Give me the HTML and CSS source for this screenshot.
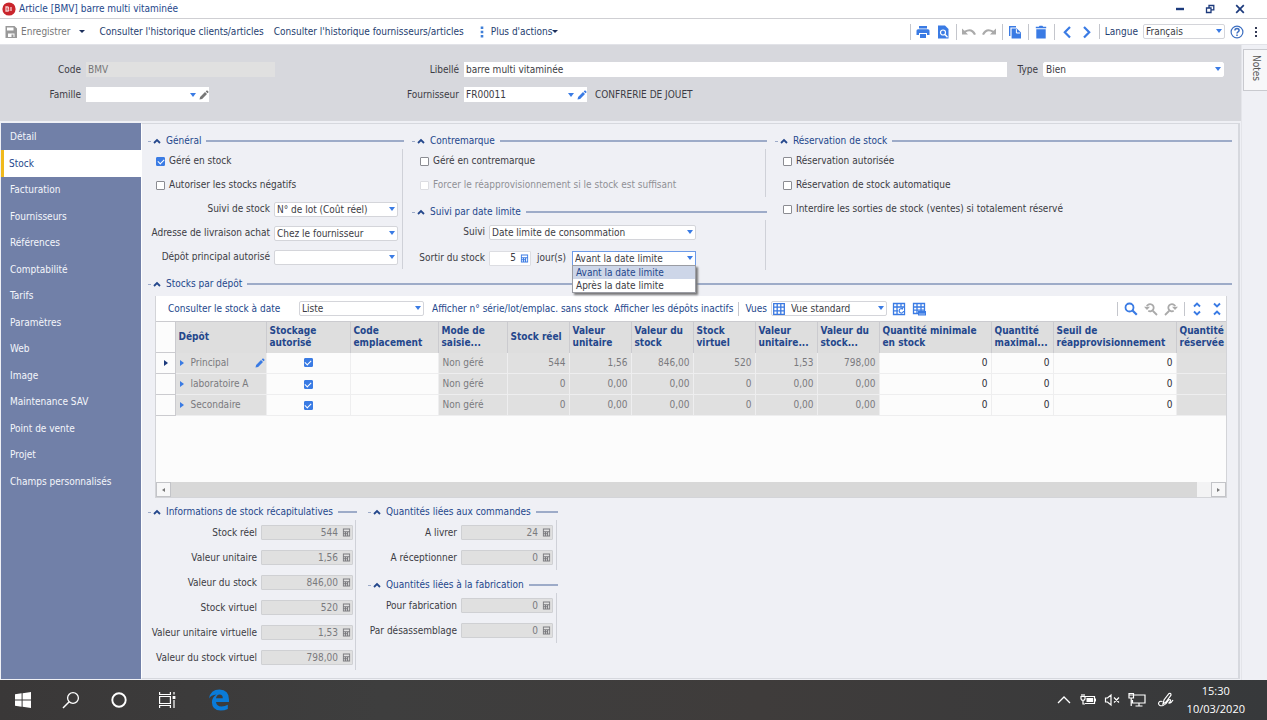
FILE: index.html
```html
<!DOCTYPE html>
<html lang="fr">
<head>
<meta charset="utf-8">
<title>Article [BMV] barre multi vitaminée</title>
<link rel="stylesheet" href="styles.css">
</head>
<body>
<svg class="sprite" aria-hidden="true">
  <symbol id="i-pencil" viewBox="0 0 10 10"><path d="M.5 9.500l.6-2.600L6 2l2 2-4.900 4.900zM6.700 1.400l.9-.8q.4-.3.8 0l1 1q.3.4 0 .8l-.8.900z"/></symbol>
  <symbol id="i-calc" viewBox="0 0 10 10"><path fill-rule="evenodd" d="M1 .5h8v9H1zM2 1.600v2h6v-2zM2 4.800v1h1.300v-1zM4.400 4.800v1h1.200v-1zM2 7v1.300h1.300V7zM4.400 7v1.300h1.200V7zM6.800 4.800v3.500H8V4.800z"/></symbol>
  <symbol id="i-up" viewBox="0 0 8 6"><path d="M1 5l3-3 3 3" fill="none" stroke="currentColor" stroke-width="1.800"/></symbol>
  <symbol id="i-search" viewBox="0 0 14 14"><circle cx="5.500" cy="5.500" r="4" fill="none" stroke="currentColor" stroke-width="1.800"/><path d="M8.500 8.500l4.300 4.300" stroke="currentColor" stroke-width="2.200"/></symbol>
</svg>

<header class="titlebar">
  <svg class="logo" viewBox="0 0 14 14"><circle cx="7" cy="7" r="6.600" fill="#c9252c"/><path d="M4 5v4h1.800q1.300-.2.900-1.200L6 7l.6-.8Q6.700 5 5.600 5zM9 5v4" fill="none" stroke="#f6cfd0" stroke-width="1.300"/></svg>
  <h1>Article [BMV] barre multi vitaminée</h1>
  <div class="winbtns">
    <button type="button" aria-label="Réduire"><svg viewBox="0 0 10 10"><path d="M1 5h8" stroke="currentColor" stroke-width="2.400"/></svg></button>
    <button type="button" aria-label="Restaurer"><svg viewBox="0 0 10 10"><path d="M1.500 4h4.500v4.500H1.500zM4 4V1.500h4.800v4.300H6" fill="none" stroke="currentColor" stroke-width="1.300"/></svg></button>
    <button type="button" aria-label="Fermer"><svg viewBox="0 0 10 10"><path d="M1.200 1.200l7.600 7.600M8.800 1.200L1.200 8.800" stroke="currentColor" stroke-width="1.700"/></svg></button>
  </div>
</header>

<div class="toolbar">
  <button type="button" class="tb save"><svg class="ic14" viewBox="0 0 14 14"><path fill="#999" fill-rule="evenodd" d="M1.500 1h9L13 3.500V13H1.500zM3 2.500v3h6.500v-3zM4 8.500V12h6.500V8.500z"/><path fill="#999" d="M7.500 9.500h2V12h-2z"/></svg>Enregistrer</button>
  <button type="button" class="drop" aria-label="Options d'enregistrement"></button>
  <button type="button" class="tb link">Consulter l'historique clients/articles</button>
  <button type="button" class="tb link">Consulter l'historique fournisseurs/articles</button>
  <button type="button" class="tb more"><svg class="dots" viewBox="0 0 4 12"><path fill="#3f7fd8" d="M.7.500h2.600v2.500H.7zM.7 4.800h2.600v2.500H.7zM.7 9.100h2.600v2.500H.7z"/></svg>Plus d'actions<span class="drop"></span></button>
  <div class="tools">
    <button type="button" class="sep" aria-label="Imprimer"><svg viewBox="0 0 14 14"><path d="M3 1h8v2.500H3zM2 4.200h10q1.500 0 1.500 1.500V10H11V8H3v2H.5V5.700q0-1.500 1.500-1.500zM4 9h6v4H4z"/></svg></button>
    <button type="button" aria-label="Aperçu"><svg viewBox="0 0 14 14"><path d="M2 .5h7L12.500 4v9.500H2z"/><circle cx="7" cy="7.500" r="2.500" fill="none" stroke="#fff" stroke-width="1.200"/><path d="M9 9.500l2.500 2.800" stroke="#fff" stroke-width="1.400"/></svg></button>
    <button type="button" class="sep off" aria-label="Annuler"><svg viewBox="0 0 14 14"><path d="M0 3.500V9.500H6L3.800 7.300Q9 4 12 10l2-.8Q10.200 1.500 2.400 5.800z"/></svg></button>
    <button type="button" class="off" aria-label="Rétablir"><svg viewBox="0 0 14 14"><path d="M14 3.500V9.500H8l2.200-2.200Q5 4 2 10L0 9.200Q3.800 1.500 11.600 5.800z"/></svg></button>
    <button type="button" class="sep" aria-label="Dupliquer"><svg viewBox="0 0 14 14"><path d="M1 1h7v1.400H2.400V11H1zM3.600 3.400h5.200L13 7.500V13.500H3.600z"/><path d="M8.400 4.200V8h3.800" fill="none" stroke="#fff" stroke-width="1"/></svg></button>
    <button type="button" class="sep" aria-label="Supprimer"><svg viewBox="0 0 14 14"><path d="M1.800 1.700h3l.8-1h2.800l.8 1h3v1.600H1.800zM2.300 4.300h9.400v9.200H2.300z"/></svg></button>
    <button type="button" class="sep" aria-label="Précédent"><svg viewBox="0 0 14 14"><path d="M10 2L4.800 7.300 10 12.600" fill="none" stroke="currentColor" stroke-width="2.200"/></svg></button>
    <button type="button" aria-label="Suivant"><svg viewBox="0 0 14 14"><path d="M4 2l5.200 5.300L4 12.600" fill="none" stroke="currentColor" stroke-width="2.200"/></svg></button>
  </div>
  <div class="lang sepl">
    <label for="langue">Langue</label>
    <div class="sel"><select id="langue"><option>Français</option></select></div>
    <button type="button" class="ibtn" aria-label="Aide"><svg viewBox="0 0 14 14"><circle cx="7" cy="7" r="5.900" fill="none" stroke="#3d6fc0" stroke-width="1.200"/><path d="M4.900 5.500Q5 3.600 7 3.600q2.100.1 2.100 1.800Q9 6.500 7.800 7.100 7 7.600 7 8.600M7 9.500v1.400" fill="none" stroke="#3d6fc0" stroke-width="1.500"/></svg></button>
    <button type="button" class="ibtn" aria-label="Menu"><svg viewBox="0 0 14 14"><path fill="#333a55" d="M6 2h2v2H6zM6 6h2v2H6zM6 10h2v2H6z"/></svg></button>
  </div>
</div>

<div class="app">
  <div class="work">
    <form class="ident">
      <label for="code">Code</label>
      <input id="code" class="ro" value="BMV" readonly>
      <label for="libelle">Libellé</label>
      <input id="libelle" value="barre multi vitaminée">
      <label for="type">Type</label>
      <div class="sel flat"><select id="type"><option>Bien</option></select></div>
      <label for="famille">Famille</label>
      <div class="combo"><input id="famille"><i class="tri"></i><svg class="pen grey"><use href="#i-pencil"/></svg></div>
      <label for="fourn">Fournisseur</label>
      <div class="pair"><div class="combo"><input id="fourn" value="FR00011"><i class="tri"></i><svg class="pen"><use href="#i-pencil"/></svg></div><span>CONFRERIE DE JOUET</span></div>
    </form>

    <div class="body">
      <nav class="side">
        <a href="#">Détail</a>
        <a href="#" class="on">Stock</a>
        <a href="#">Facturation</a>
        <a href="#">Fournisseurs</a>
        <a href="#">Références</a>
        <a href="#">Comptabilité</a>
        <a href="#">Tarifs</a>
        <a href="#">Paramètres</a>
        <a href="#">Web</a>
        <a href="#">Image</a>
        <a href="#">Maintenance SAV</a>
        <a href="#">Point de vente</a>
        <a href="#">Projet</a>
        <a href="#">Champs personnalisés</a>
      </nav>

      <main class="panel">
        <div class="top">
          <section class="group">
            <h2><svg><use href="#i-up"/></svg>Général</h2>
            <div class="rows edge">
              <label class="check"><input type="checkbox" checked>Géré en stock</label>
              <label class="check"><input type="checkbox">Autoriser les stocks négatifs</label>
              <div class="row general"><label for="suivi1">Suivi de stock</label><div class="sel"><select id="suivi1"><option>N° de lot (Coût réel)</option></select></div></div>
              <div class="row general"><label for="adr">Adresse de livraison achat</label><div class="sel"><select id="adr"><option>Chez le fournisseur</option></select></div></div>
              <div class="row general"><label for="dep">Dépôt principal autorisé</label><div class="sel"><select id="dep"><option></option></select></div></div>
            </div>
          </section>

          <div class="stack">
            <section class="group">
              <h2><svg><use href="#i-up"/></svg>Contremarque</h2>
              <div class="rows edge">
                <label class="check"><input type="checkbox">Géré en contremarque</label>
                <label class="check dis"><input type="checkbox" disabled>Forcer le réapprovisionnement si le stock est suffisant</label>
              </div>
            </section>
            <section class="group">
              <h2><svg><use href="#i-up"/></svg>Suivi par date limite</h2>
              <div class="rows edge spaced">
                <div class="row dates"><label for="suivi2">Suivi</label><div class="sel"><select id="suivi2"><option>Date limite de consommation</option></select></div></div>
                <div class="row dates"><label for="sortir">Sortir du stock</label>
                  <div class="days">
                    <div class="num live"><input id="sortir" value="5"><svg><use href="#i-calc"/></svg></div>
                    <label for="quand">jour(s)</label>
                    <div class="sel focus"><select id="quand"><option>Avant la date limite</option><option>Après la date limite</option></select>
                      <ul class="menu" role="listbox"><li class="hot" role="option">Avant la date limite</li><li role="option">Après la date limite</li></ul>
                    </div>
                  </div>
                </div>
              </div>
            </section>
          </div>

          <section class="group">
            <h2><svg><use href="#i-up"/></svg>Réservation de stock</h2>
            <div class="rows">
              <label class="check"><input type="checkbox">Réservation autorisée</label>
              <label class="check"><input type="checkbox">Réservation de stock automatique</label>
              <label class="check"><input type="checkbox">Interdire les sorties de stock (ventes) si totalement réservé</label>
            </div>
          </section>
        </div>

        <section class="group depots">
          <h2><svg><use href="#i-up"/></svg>Stocks par dépôt</h2>
          <div class="grid">
            <div class="gridbar">
              <label for="liste">Consulter le stock à date</label>
              <div class="sel liste"><select id="liste"><option>Liste</option></select></div>
              <button type="button" class="tb">Afficher n° série/lot/emplac. sans stock</button>
              <button type="button" class="tb second">Afficher les dépôts inactifs</button>
              <label for="vues" class="vlabel">Vues</label>
              <div class="sel vues"><svg viewBox="0 0 12 12"><path d="M.7.700h10.600v10.600H.7zM.7 4.200h10.600M.7 7.800h10.600M4.200.700v10.600M7.800.700v10.600" fill="none" stroke="#3a78e0" stroke-width="1.300"/></svg><select id="vues"><option>Vue standard</option></select></div>
              <button type="button" class="ibtn" aria-label="Réinitialiser la vue"><svg viewBox="0 0 14 14"><path d="M1.500 1.500h11v11h-11zM1.500 5h11M1.500 8.800H6M5 1.500v11M9 1.500V5" fill="none" stroke="currentColor" stroke-width="1.300"/><path d="M7 6.500h5v5H7z" fill="#fff"/><path d="M11.500 9a2.200 2.200 0 1 1-1-2M10.500 5.500V7.500" fill="none" stroke="currentColor" stroke-width="1.200"/></svg></button>
              <button type="button" class="ibtn" aria-label="Enregistrer la vue"><svg viewBox="0 0 14 14"><path d="M1.500 1.500h11v10h-11zM1.500 5h11M1.500 8.200h11M5 1.500v10M9 1.500v10" fill="none" stroke="currentColor" stroke-width="1.300"/><path d="M6 9h8v4.500H6z"/><path d="M7.500 12h1M9.500 12h1M11.500 12h1" stroke="#fff"/></svg></button>
              <div class="gtools">
                <button type="button" aria-label="Rechercher"><svg><use href="#i-search"/></svg></button>
                <button type="button" class="off" aria-label="Résultat précédent"><svg viewBox="0 0 14 14"><path d="M2.800 4.200a3.600 3.600 0 1 1 1.500 4.600M9 9l4 4" fill="none" stroke="currentColor" stroke-width="1.800"/><path d="M0 4.800h6L3 8z"/></svg></button>
                <button type="button" class="off" aria-label="Résultat suivant"><svg viewBox="0 0 14 14"><path d="M11.200 4.200a3.600 3.600 0 1 0-1.500 4.600M5 9l-4 4" fill="none" stroke="currentColor" stroke-width="1.800"/><path d="M14 4.800H8L11 8z"/></svg></button>
                <button type="button" class="sep" aria-label="Tout développer"><svg viewBox="0 0 14 14"><path d="M4 4.500l3-3 3 3M4 9.500l3 3 3-3" fill="none" stroke="currentColor" stroke-width="1.900"/></svg></button>
                <button type="button" aria-label="Tout réduire"><svg viewBox="0 0 14 14"><path d="M4 1.500l3 3 3-3M4 12.500l3-3 3 3" fill="none" stroke="currentColor" stroke-width="1.900"/></svg></button>
              </div>
            </div>
            <div class="scroller">
              <table>
                <colgroup><col class="w19"><col class="w91"><col class="w84"><col class="w88"><col class="w69"><col class="w62"><col class="w62"><col class="w62"><col class="w62"><col class="w62"><col class="w62"><col class="w112"><col class="w62"><col class="w123"><col></colgroup>
                <thead><tr><th class="rh"></th><th>Dépôt</th><th>Stockage<br>autorisé</th><th>Code<br>emplacement</th><th>Mode de<br>saisie...</th><th>Stock réel</th><th>Valeur<br>unitaire</th><th>Valeur du<br>stock</th><th>Stock<br>virtuel</th><th>Valeur<br>unitaire...</th><th>Valeur du<br>stock...</th><th>Quantité minimale<br>en stock</th><th>Quantité<br>maximal...</th><th>Seuil de<br>réapprovisionnement</th><th>Quantité<br>réservée</th></tr></thead>
                <tbody>
                  <tr><td class="rh"><i class="cur"></i></td><td class="name"><div><i class="exp"></i>Principal<svg class="pen"><use href="#i-pencil"/></svg></div></td><td class="w c"><input type="checkbox" checked aria-label="Stockage autorisé Principal"></td><td class="w"></td><td>Non géré</td><td class="n">544</td><td class="n">1,56</td><td class="n">846,00</td><td class="n">520</td><td class="n">1,53</td><td class="n">798,00</td><td class="w n">0</td><td class="w n">0</td><td class="w n">0</td><td></td></tr>
                  <tr><td class="rh"></td><td class="name"><div><i class="exp"></i>laboratoire A</div></td><td class="w c"><input type="checkbox" checked aria-label="Stockage autorisé laboratoire A"></td><td class="w"></td><td>Non géré</td><td class="n">0</td><td class="n">0,00</td><td class="n">0,00</td><td class="n">0</td><td class="n">0,00</td><td class="n">0,00</td><td class="w n">0</td><td class="w n">0</td><td class="w n">0</td><td></td></tr>
                  <tr><td class="rh"></td><td class="name"><div><i class="exp"></i>Secondaire</div></td><td class="w c"><input type="checkbox" checked aria-label="Stockage autorisé Secondaire"></td><td class="w"></td><td>Non géré</td><td class="n">0</td><td class="n">0,00</td><td class="n">0,00</td><td class="n">0</td><td class="n">0,00</td><td class="n">0,00</td><td class="w n">0</td><td class="w n">0</td><td class="w n">0</td><td></td></tr>
                </tbody>
              </table>
            </div>
            <div class="hscroll"><button type="button" aria-label="Défiler à gauche"><i class="al"></i></button><span class="rest"></span><button type="button" aria-label="Défiler à droite"><i class="ar"></i></button></div>
          </div>
        </section>

        <div class="bottom">
          <section class="group">
            <h2><svg><use href="#i-up"/></svg>Informations de stock récapitulatives</h2>
            <div class="rows edge tall">
              <div class="row sum"><label for="s1">Stock réel</label><div class="num"><input id="s1" value="544" readonly><svg><use href="#i-calc"/></svg></div></div>
              <div class="row sum"><label for="s2">Valeur unitaire</label><div class="num"><input id="s2" value="1,56" readonly><svg><use href="#i-calc"/></svg></div></div>
              <div class="row sum"><label for="s3">Valeur du stock</label><div class="num"><input id="s3" value="846,00" readonly><svg><use href="#i-calc"/></svg></div></div>
              <div class="row sum"><label for="s4">Stock virtuel</label><div class="num"><input id="s4" value="520" readonly><svg><use href="#i-calc"/></svg></div></div>
              <div class="row sum"><label for="s5">Valeur unitaire virtuelle</label><div class="num"><input id="s5" value="1,53" readonly><svg><use href="#i-calc"/></svg></div></div>
              <div class="row sum"><label for="s6">Valeur du stock virtuel</label><div class="num"><input id="s6" value="798,00" readonly><svg><use href="#i-calc"/></svg></div></div>
            </div>
          </section>
          <div class="stack">
            <section class="group">
              <h2><svg><use href="#i-up"/></svg>Quantités liées aux commandes</h2>
              <div class="rows edge tall">
                <div class="row qty"><label for="q1">A livrer</label><div class="num"><input id="q1" value="24" readonly><svg><use href="#i-calc"/></svg></div></div>
                <div class="row qty"><label for="q2">A réceptionner</label><div class="num"><input id="q2" value="0" readonly><svg><use href="#i-calc"/></svg></div></div>
              </div>
            </section>
            <section class="group">
              <h2><svg><use href="#i-up"/></svg>Quantités liées à la fabrication</h2>
              <div class="rows edge tall">
                <div class="row qty"><label for="q3">Pour fabrication</label><div class="num"><input id="q3" value="0" readonly><svg><use href="#i-calc"/></svg></div></div>
                <div class="row qty"><label for="q4">Par désassemblage</label><div class="num"><input id="q4" value="0" readonly><svg><use href="#i-calc"/></svg></div></div>
              </div>
            </section>
          </div>
        </div>
      </main>
    </div>
  </div>
  <aside class="notes"><button type="button">Notes</button></aside>
</div>

<footer class="taskbar">
  <button type="button" aria-label="Démarrer"><svg viewBox="0 0 18 18"><path fill="#fff" d="M1 3.300l6.600-1v6.200H1zM8.600 2.200L17 1v7.500H8.600zM1 9.500h6.600v6.200L1 14.700zM8.600 9.500H17V17l-8.400-1.200z"/></svg></button>
  <button type="button" aria-label="Rechercher"><svg viewBox="0 0 18 18"><circle cx="11" cy="7" r="5.400" fill="none" stroke="#fff" stroke-width="1.300"/><path d="M7.200 10.800L1 17" stroke="#fff" stroke-width="1.500"/></svg></button>
  <button type="button" aria-label="Cortana"><svg viewBox="0 0 18 18"><circle cx="9" cy="9" r="6.700" fill="none" stroke="#fff" stroke-width="1.900"/></svg></button>
  <button type="button" aria-label="Vue des tâches"><svg viewBox="0 0 18 18"><path d="M1.600 1v2.500h10.800V1M1.600 17v-2.500h10.800V17M1.600 5.500h10.800v7H1.600zM16 1v2.500M16 9v8" fill="none" stroke="#fff" stroke-width="1.200"/><path d="M14.600 5h2.800v3h-2.800z" fill="#fff"/></svg></button>
  <button type="button" class="edge-app" aria-label="Edge"><svg viewBox="0 0 22 22"><path fill="#0a7bd8" d="M1 9.500Q2.500.5 11.500.500 21 .8 21 10.500V13H8q.5 4.300 5.500 4.500 3.500 0 6.300-1.800v4.200q-3.300 1.700-7.300 1.700-8.300-.3-8.600-8.300.1-5 4.600-7.700Q2.800 6.300 1 9.500zM8 9.200h6.800q0-3.700-3.200-3.700Q8.600 5.700 8 9.200z"/></svg></button>
  <div class="tray">
    <svg viewBox="0 0 16 16"><path d="M2 11l6-6 6 6" fill="none" stroke="#fff" stroke-width="1.300"/></svg>
    <svg viewBox="0 0 16 16"><path d="M5 4.500h9.500v7H5M15.500 6.500v3M1 4.500h4v2.300q-.2 1.500-2 1.500t-2-1.500zM2 2v2.500M4 2v2.500M3 8.300V12h2" fill="none" stroke="#fff" stroke-width="1.200"/><path fill="#fff" d="M6.500 6h6.600v4H6.500z"/></svg>
    <svg viewBox="0 0 16 16"><path d="M1.500 6h2L7 3v10l-3.500-3h-2zM10 5.500l5 5M15 5.500l-5 5" fill="none" stroke="#fff" stroke-width="1.200"/></svg>
    <svg class="net" viewBox="0 0 18 16"><path d="M6 3h11v8H4.500V8M11 11v3M7.500 14h7M1 1.500h4.500V6H1zM3.200 6v8M1.500 3h3.500" fill="none" stroke="#fff" stroke-width="1.200"/></svg>
    <svg class="ink" viewBox="0 0 18 16"><path d="M6 12l1-4 5-6.500q2-.8 2 1.500L9 10zM5.500 9.500Q2 8.500 1.500 11.500 2 14.500 6 13.500q3-1 4.500-4 1-2 2.500-2 1.500 1-1 3.500 2 .5 4-3" fill="none" stroke="#fff" stroke-width="1.200"/></svg>
  </div>
  <div class="clock"><time>15:30</time><time>10/03/2020</time></div>
</footer>
</body>
</html>
```

FILE: styles.css
```css
:root {
  --ink: #3c3c44;
  --navy: #24478c;
  --blue: #3a7be4;
  --line: #9dabc8;
  --page: #eff0f5;
  --cell: #e0e0e0;
}
* { box-sizing: border-box; }
body {
  margin: 0;
  min-height: 100vh;
  display: flex;
  flex-direction: column;
  background: var(--page);
  color: var(--ink);
  font: 10px/14px "DejaVu Sans Condensed", "DejaVu Sans", sans-serif;
}
.sprite { display: none; }
svg { display: block; fill: currentColor; flex: none; }
button, input, select { font: inherit; color: inherit; margin: 0; border: 0; padding: 0; background: none; border-radius: 0; }
input, select { min-width: 0; outline: 0; }
h1, h2, ul { margin: 0; padding: 0; font: inherit; list-style: none; }
label, button, span, th, td { white-space: nowrap; }

.titlebar { height: 19px; display: flex; align-items: center; gap: 3px; padding: 0 22px 0 2px; background: #fff; border-bottom: 1px solid #cfcfd3; color: var(--navy); }
.logo { width: 14px; height: 14px; }
.winbtns { margin-left: auto; display: flex; gap: 20px; color: #1c3a7c; }
.winbtns svg { width: 10px; height: 10px; }

.toolbar { height: 26px; display: flex; align-items: center; padding: 0 4px; background: #fff; border-bottom: 1px solid #e2e3e8; color: #25406f; }
.tb { display: flex; align-items: center; }
.save { color: #777; gap: 3px; margin-right: 8px; }
.ic14 { width: 14px; height: 14px; }
.drop { border: 3px solid transparent; border-top-color: #1c2f5c; border-bottom: 0; margin-right: 15px; }
.link { margin-right: 10px; }
.more { margin-left: 6px; gap: 7px; }
.more .drop { margin: 0 0 0 -7px; }
.dots { width: 4px; height: 12px; }
.tools, .gtools { margin-left: auto; display: flex; gap: 6px; color: var(--blue); }
.tools svg, .gtools svg, .ibtn svg { width: 14px; height: 14px; }
.tools button { height: 16px; }
.sep { border-left: 1px solid #c4c6cc; padding-left: 5px; }
.tools .off, .gtools .off { color: #aaa; }
.lang { display: flex; align-items: center; gap: 5px; margin-left: 5px; padding-left: 5px; border-left: 1px solid #c4c6cc; }
.lang .sel { width: 82px; color: var(--ink); }
.ibtn { color: var(--blue); }

.sel { position: relative; display: flex; align-items: center; height: 15px; background: #fff; border: 1px solid #d4d5da; border-radius: 2px; }
.sel select { appearance: none; flex: 1; width: 100%; height: 13px; line-height: 13px; padding-left: 2px; }
.sel::after, .tri { content: ""; border: 3px solid transparent; border-top: 4px solid var(--blue); border-bottom: 0; }
.sel::after { position: absolute; right: 2px; top: 4px; pointer-events: none; }
.sel.flat { border-color: #fff; }
.sel.focus { border-color: #6d9be8; border-radius: 0; }

.app { flex: 1; display: flex; }
.work { flex: 1; min-width: 0; display: flex; flex-direction: column; }
.notes { width: 26px; padding-top: 4px; border-left: 1px solid #e4e5ea; }
.notes button { width: 100%; height: 42px; margin-left: 1px; writing-mode: vertical-rl; background: #f7f7f9; border: 1px solid #c9cacf; border-right: 0; color: #555; padding-bottom: 4px; }

.ident { display: grid; grid-template-columns: 72px 189px 179px 1fr 26px 181px; grid-auto-rows: 25px; gap: 0 5px; align-items: center; padding: 12px 17px 14px 9px; background: #d7d8dd; }
.ident label { text-align: right; }
.ident > input { height: 15px; background: #fff; padding: 0 2px; }
.ident > input.ro { background: #e0e0e0; color: #777; }
.combo { display: flex; align-items: center; width: 123px; height: 15px; background: #fff; gap: 3px; }
.combo input { flex: 1; padding-left: 2px; }
.pen { width: 10px; height: 10px; color: var(--blue); }
.pen.grey { color: #777; }
.pair { display: flex; align-items: center; gap: 8px; }

.body { flex: 1; display: flex; padding: 2px 1px 1px; }
.side { width: 140px; padding-top: 1px; background: #7180a8; color: #f4f6fb; }
.side a { display: flex; align-items: center; height: 26px; padding-left: 9px; color: inherit; text-decoration: none; }
.side a:nth-child(even) { height: 27px; }
.side .on { background: #fff; color: var(--navy); border-left: 3px solid #f0b91c; padding-left: 5px; }
.panel { flex: 1; min-width: 0; display: flex; flex-direction: column; gap: 6px; padding: 9px 6px 8px; border: 1px solid #d6d8de; border-left-color: #fff; border-right-width: 2px; }

.group h2 { display: flex; align-items: center; height: 16px; color: var(--navy); }
.group h2::before { content: ""; width: 3px; height: 1px; background: var(--line); margin-right: 2px; }
.group h2::after { content: ""; flex: 1; height: 2px; background: var(--line); margin-left: 5px; }
.group h2 svg { width: 8px; height: 6px; margin-right: 5px; }
.edge { border-right: 1px solid #cfd1d8; margin-right: 1px; }
.top { display: grid; grid-template-columns: 256px 355px 1fr; gap: 8px; }
.stack { display: flex; flex-direction: column; gap: 7px; }
.rows { display: flex; flex-direction: column; }
.spaced { gap: 2px; }
.check { display: flex; align-items: center; gap: 4px; height: 24px; padding-left: 8px; }
.dis { color: #909096; }
input[type=checkbox] { appearance: none; width: 9px; height: 9px; background: #fff; border: 1px solid #8b8c92; border-radius: 1px; display: grid; place-items: center; }
input[type=checkbox]:checked { background: var(--blue); border-color: var(--blue); }
input[type=checkbox]:checked::after { content: ""; width: 5px; height: 3px; border: solid #fff; border-width: 0 0 1px 1px; transform: rotate(-45deg); margin-bottom: 1px; }
input[type=checkbox]:disabled { border-color: #dcdde2; }
.row { display: grid; gap: 4px; align-items: center; height: 24px; }
.row label { text-align: right; }
.general { grid-template-columns: 122px 124px; }
.dates { grid-template-columns: 73px 207px; }
.days { display: flex; align-items: center; justify-content: space-between; }
.days .sel { width: 124px; }
.menu { position: absolute; z-index: 2; top: 13px; left: -1px; right: -1px; background: #fff; border: 1px solid #9a9ca3; box-shadow: 2px 2px 2px #777; }
.menu li { height: 13px; line-height: 13px; padding-left: 3px; }
.menu .hot { background: #cdd6e8; color: var(--navy); }
.num { display: flex; align-items: center; gap: 4px; height: 15px; padding-right: 1px; background: var(--cell); border: 1px solid #cfd0d3; border-radius: 1px; color: #7a7a7e; }
.num input { flex: 1; width: 0; text-align: right; height: 13px; }
.num svg { width: 9px; height: 9px; }
.num.live { width: 42px; background: #fff; color: var(--ink); border-color: #dcdde2; }
.num.live svg { color: var(--blue); }
.tall .row { height: 25px; }
.sum { grid-template-columns: 109px 92px; }
.qty { grid-template-columns: 89px 92px; }
.bottom { display: grid; grid-template-columns: 209px 190px; gap: 11px; }

.depots { flex: 1; display: flex; flex-direction: column; }
.grid { flex: 1; display: flex; flex-direction: column; margin: 4px 5px 0 7px; background: #fcfcfc; border: 1px solid #d3d4d8; border-top: 0; }
.gridbar { display: flex; align-items: center; height: 25px; padding: 0 2px 0 12px; background: #fff; color: var(--navy); }
.gridbar .sel { color: var(--ink); }
.liste { width: 125px; margin-right: 8px; }
.gridbar > label:first-child { width: 131px; }
.second { margin-left: 6px; }
.vlabel { margin-left: 5px; padding-left: 6px; border-left: 1px solid #c4c6cc; }
.vues { width: 116px; margin: 0 5px 0 4px; }
.vues svg { width: 12px; height: 12px; margin-left: 1px; }
.vues select { padding-left: 6px; }
.gridbar .ibtn { margin-right: 6px; }
.gtools { border-left: 1px solid #c4c6cc; padding-left: 6px; }
.scroller { flex: 1; overflow: hidden; }
table { width: 100%; table-layout: fixed; border-collapse: collapse; }
th { height: 31px; padding: 0 0 0 3px; text-align: left; line-height: 12px; font-weight: bold; color: var(--navy); background: #dedede; border-left: 1px solid #cbcbcf; border-top: 1px solid #cbcbcf; }
th:nth-child(2) { border-left-color: #dedede; }
td { height: 21px; padding: 0 4px; background: var(--cell); color: #7a7a7e; border: 1px solid #eeeeef; border-top: 0; border-right: 0; overflow: hidden; }
th.rh, td.rh { background: #fcfcfc; border: 1px solid #cbcbcf; border-left: 0; padding: 0; }
td.w { background: #fcfcfc; color: #2b2b33; }
.n { text-align: right; padding-right: 3px; }
.c input { margin: 0 auto; }
.name div { display: flex; align-items: center; }
.name .pen { margin-left: auto; margin-right: -3px; }
.exp, .cur { border: 3px solid transparent; border-left: 4px solid var(--blue); border-right: 0; }
.exp { margin-right: 7px; }
.cur { display: block; width: 0; margin-left: 8px; border-left-color: #1c3a7c; }
.hscroll { display: flex; height: 15px; background: #d8d8d8; }
.hscroll button { width: 15px; background: #f7f7f8; border: 1px solid #c3c4c8; display: grid; place-items: center; }
.hscroll .rest { width: 14px; margin-left: auto; background: #f3f3f4; }
.al, .ar { border: 2px solid transparent; }
.al { border-right: 3px solid #777; border-left: 0; }
.ar { border-left: 3px solid #777; border-right: 0; }

.w19 { width: 19px; } .w62 { width: 62px; } .w69 { width: 69px; } .w84 { width: 84px; }
.w88 { width: 88px; } .w91 { width: 91px; } .w112 { width: 112px; } .w123 { width: 123px; }

.taskbar { height: 40px; display: flex; align-items: center; padding: 0 22px 0 14px; background: linear-gradient(90deg, #3a3838, #3e3e3e 30%, #3f3c3b 60%, #37393b); color: #fff; font: 11px/18px "Open Sans", sans-serif; }
.taskbar > button { width: 18px; margin-right: 30px; }
.taskbar > button.edge-app { width: 22px; margin-left: 2px; }
.taskbar > button svg { width: 100%; }
.tray { margin-left: auto; display: flex; align-items: center; gap: 8px; }
.tray svg { width: 16px; height: 16px; }
.tray .net, .tray .ink { width: 18px; }
.tray .ink { margin-left: 3px; }
.clock { display: flex; flex-direction: column; align-items: center; margin-left: 12px; }
```
